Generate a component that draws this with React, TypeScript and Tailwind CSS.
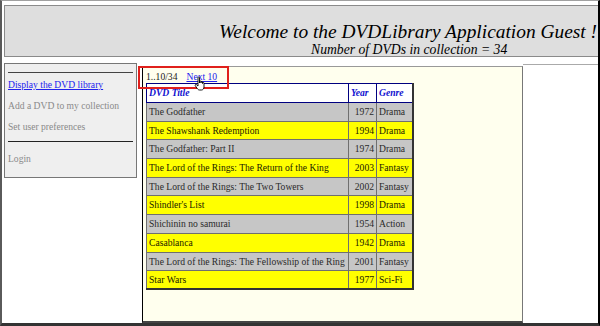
import React from "react";

const rows: [string, string, string][] = [
  ["The Godfather", "1972", "Drama"],
  ["The Shawshank Redemption", "1994", "Drama"],
  ["The Godfather: Part II", "1974", "Drama"],
  ["The Lord of the Rings: The Return of the King", "2003", "Fantasy"],
  ["The Lord of the Rings: The Two Towers", "2002", "Fantasy"],
  ["Shindler's List", "1998", "Drama"],
  ["Shichinin no samurai", "1954", "Action"],
  ["Casablanca", "1942", "Drama"],
  ["The Lord of the Rings: The Fellowship of the Ring", "2001", "Fantasy"],
  ["Star Wars", "1977", "Sci-Fi"],
];

export default function App() {
  return (
    <div className="relative w-[600px] h-[326px] overflow-hidden bg-white border-l-2 border-l-[#5a5a5a] border-t border-t-[#a0a0a0] border-r-2 border-r-black border-b-[3px] border-b-[#333] flex flex-col font-['Liberation_Serif','Times_New_Roman',serif]">
      {/* Header */}
      <div className="mt-[4px] ml-[2px] h-[52px] bg-[#dedede] border-l border-t border-b border-[#8a8a8a] flex flex-col">
        <div className="mt-[14px] text-right pr-[1px] italic text-[19.4px] leading-[23px] text-black whitespace-nowrap">
          Welcome to the DVDLibrary Application Guest !
        </div>
        <div className="ml-[306px] italic text-[13.7px] leading-[14px] text-black whitespace-nowrap">
          Number of DVDs in collection = 34
        </div>
      </div>

      {/* Content row */}
      <div className="flex items-start mt-[6px] flex-1">
        {/* Sidebar */}
        <div className="ml-[2px] w-[133px] h-[115px] bg-[#efefef] border border-[#777] px-[3px] text-[9.6px]">
          <div className="mt-[8px] h-0 border-t border-[#444]" />
          <div className="mt-[6px] leading-[12px]">
            <a className="text-[#2222ee] underline">Display the DVD library</a>
          </div>
          <div className="mt-[9px] leading-[12px] text-[#8a8a8a]">Add a DVD to my collection</div>
          <div className="mt-[9px] leading-[12px] text-[#8a8a8a]">Set user preferences</div>
          <div className="mt-[8px] h-0 border-t border-[#222]" />
          <div className="mt-[11px] leading-[12px] text-[#8a8a8a]">Login</div>
        </div>

        {/* Main panel */}
        <div className="ml-[5px] mt-[3px] w-[381px] h-[257px] bg-[#ffffee] border-l border-l-black border-t border-t-[#999] border-r border-r-[#777] border-b-2 border-b-[#444] pl-[3px]">
          <div className="mt-[3px] h-[13px] leading-[13px] text-[9.6px] text-[#222] whitespace-nowrap">
            1..10/34<span className="inline-block w-[9px]" />
            <a className="text-[#2222ee] underline">Next 10</a>
          </div>
          <table className="border-collapse table-fixed w-[266px] text-[9.6px] border-l border-t border-[#000060] border-r-2 border-b-2 border-r-[#333] border-b-[#333]">
            <colgroup>
              <col className="w-[202px]" />
              <col className="w-[28px]" />
              <col className="w-[36px]" />
            </colgroup>
            <thead>
              <tr className="h-[19px]">
                <th className="bg-white border border-[#000080] text-left px-[2px] italic font-bold text-[#1010d0]">DVD Title</th>
                <th className="bg-white border border-[#000080] text-left px-[2px] italic font-bold text-[#1010d0]">Year</th>
                <th className="bg-white border border-[#000080] text-left px-[2px] italic font-bold text-[#1010d0]">Genre</th>
              </tr>
            </thead>
            <tbody>
              {rows.map((r, i) => {
                const bg = i % 2 === 0 ? "bg-[#c6c6c6] text-[#2a2a2a]" : "bg-[#ffff00] text-[#1a1a00]";
                return (
                  <tr key={i} className="h-[18.7px]">
                    <td className={`${bg} border border-[#6f6f6f] px-[2px] whitespace-nowrap leading-none`}>{r[0]}</td>
                    <td className={`${bg} border border-[#6f6f6f] px-[2px] text-right leading-none`}>{r[1]}</td>
                    <td className={`${bg} border border-[#6f6f6f] px-[2px] leading-none whitespace-nowrap`}>{r[2]}</td>
                  </tr>
                );
              })}
            </tbody>
          </table>
        </div>

        <div className="flex-1 mt-[1px] border-t border-[#aaa]" />
      </div>

      {/* Red highlight */}
      <div className="absolute left-[136px] top-[65px] w-[91px] h-[23px] border-2 border-[#e0201c]" />

      {/* Hand cursor */}
      <svg className="absolute left-[192px] top-[75px]" width="13" height="15" viewBox="0 0 13 15">
        <path
          d="M4 1.5 C4 0.8 5.5 0.8 5.5 1.5 L5.5 7 L5.5 5.5 C5.5 4.8 7 4.8 7 5.5 L7 7 L7 6 C7 5.3 8.5 5.3 8.5 6 L8.5 7.5 L8.5 7 C8.5 6.3 10 6.3 10 7 L10 11 C10 12.5 9 14 7.5 14 L5.5 14 C4.5 14 3.8 13.3 3.2 12.5 L1.2 9.5 C0.8 8.8 1.8 8 2.5 8.7 L4 10 Z"
          fill="white"
          stroke="black"
          strokeWidth="0.9"
          strokeLinejoin="round"
        />
      </svg>
    </div>
  );
}
